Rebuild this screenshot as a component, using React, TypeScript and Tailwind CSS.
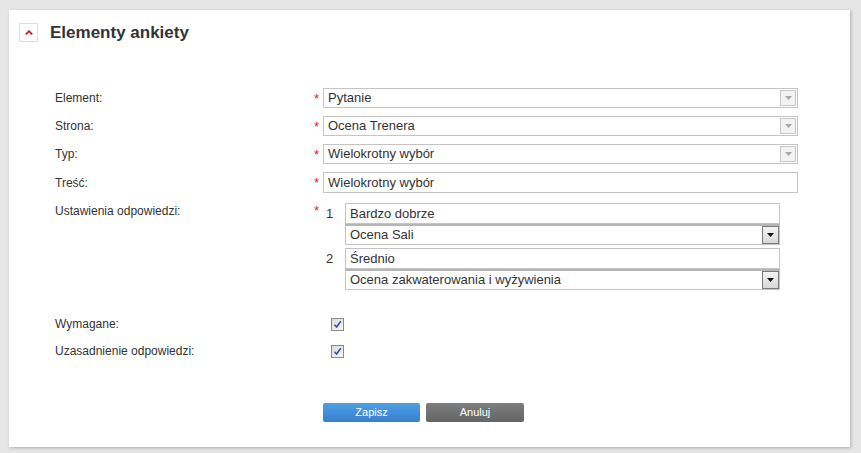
import React from "react";

const font = { fontFamily: '"Liberation Sans", Arial, sans-serif' };

function DisabledSelect({ value }: { value: string }) {
  return (
    <div className="flex h-[20px] w-[475px] items-stretch border border-[#c4c4c4] bg-white">
      <div className="flex-1 pl-[4px] text-[13px] leading-[18px] text-[#333]">{value}</div>
      <div className="m-[1px] flex w-[16px] items-center justify-center border border-[#c8c8c8] bg-[#f2f2f2]">
        <svg width="7" height="4" viewBox="0 0 7 4">
          <path d="M0 0h7L3.5 4z" fill="#a8a8a8" />
        </svg>
      </div>
    </div>
  );
}

function TextInput({ value, w }: { value: string; w: string }) {
  return (
    <div className={`h-[21px] ${w} border border-[#c4c4c4] bg-white pl-[4px] text-[13px] leading-[19px] text-[#333]`}>
      {value}
    </div>
  );
}

function NativeSelect({ value }: { value: string }) {
  return (
    <div className="flex h-[21px] w-[435px] items-stretch border border-[#c4c4c4] border-t-[#b5b5b5] border-t-2 bg-white">
      <div className="flex-1 pl-[4px] text-[13px] leading-[17px] text-[#333]">{value}</div>
      <div className="flex w-[17px] items-center justify-center border border-[#7a7a7a] bg-gradient-to-b from-[#f4f4f4] to-[#d8d8d8]">
        <svg width="7" height="4" viewBox="0 0 7 4">
          <path d="M0 0h7L3.5 4z" fill="#111" />
        </svg>
      </div>
    </div>
  );
}

function Star() {
  return <div className="w-[9px] pt-[1px] text-[13px] leading-[14px] text-[#e02020]">*</div>;
}

function Checkbox() {
  return (
    <div className="flex h-[13px] w-[13px] items-center justify-center border border-[#8a8a8a] bg-gradient-to-br from-[#dcdcdc] to-[#f6f6f6]">
      <svg width="9" height="9" viewBox="0 0 9 9">
        <path d="M1.5 4.8 L3.6 7 L7.8 1.2" stroke="#3a4fa8" strokeWidth="1.6" fill="none" />
      </svg>
    </div>
  );
}

export default function App() {
  return (
    <div className="h-[453px] w-[861px] overflow-hidden bg-[#e6e6e6] pl-[9px] pt-[10px]" style={font}>
      <div className="flex h-[437px] w-[841px] flex-col bg-white shadow-[1px_1px_3px_rgba(0,0,0,0.25)]">
        <div className="flex items-center pl-[10px] pt-[13px]">
          <div className="flex h-[19px] w-[19px] items-center justify-center border border-[#dedede] bg-white">
            <svg width="8" height="5" viewBox="0 0 8 5">
              <path d="M0.8 4.4 L4 1.2 L7.2 4.4" stroke="#d8141c" strokeWidth="1.8" fill="none" />
            </svg>
          </div>
          <div className="ml-[12px] text-[17px] font-bold leading-[19px] text-[#333]">Elementy ankiety</div>
        </div>

        <div className="mt-[46px] flex flex-col gap-[8px] pl-[46px] text-[12px] text-[#333]">
          <div className="flex items-center">
            <div className="w-[259px]">Element:</div>
            <Star />
            <DisabledSelect value="Pytanie" />
          </div>
          <div className="flex items-center">
            <div className="w-[259px]">Strona:</div>
            <Star />
            <DisabledSelect value="Ocena Trenera" />
          </div>
          <div className="flex items-center">
            <div className="w-[259px]">Typ:</div>
            <Star />
            <DisabledSelect value="Wielokrotny wybór" />
          </div>
          <div className="flex items-center">
            <div className="w-[259px]">Treść:</div>
            <Star />
            <TextInput value="Wielokrotny wybór" w="w-[475px]" />
          </div>
          <div className="mt-[2px] flex items-start">
            <div className="w-[259px] pt-[1px] leading-[14px]">Ustawienia odpowiedzi:</div>
            <Star />
            <div className="flex flex-col gap-[3px]">
              <div className="flex">
                <div className="w-[22px] pl-[3px] text-[13px] leading-[22px]">1</div>
                <div className="flex flex-col">
                  <TextInput value="Bardzo dobrze" w="w-[435px]" />
                  <NativeSelect value="Ocena Sali" />
                </div>
              </div>
              <div className="flex">
                <div className="w-[22px] pl-[3px] text-[13px] leading-[22px]">2</div>
                <div className="flex flex-col">
                  <TextInput value="Średnio" w="w-[435px]" />
                  <NativeSelect value="Ocena zakwaterowania i wyżywienia" />
                </div>
              </div>
            </div>
          </div>
          <div className="mt-[19px] flex items-center">
            <div className="w-[276px] leading-[14px]">Wymagane:</div>
            <Checkbox />
          </div>
          <div className="mt-[5px] flex items-center">
            <div className="w-[276px] leading-[14px]">Uzasadnienie odpowiedzi:</div>
            <Checkbox />
          </div>
        </div>

        <div className="mt-[45px] flex gap-[6px] pl-[314px]">
          <button className="h-[19px] w-[97px] rounded-[2px] bg-gradient-to-b from-[#4c9fe8] to-[#3a7fcb] text-[11px] leading-[19px] text-white">
            Zapisz
          </button>
          <button className="h-[19px] w-[98px] rounded-[2px] bg-gradient-to-b from-[#7e7e7e] to-[#646464] text-[11px] leading-[19px] text-white">
            Anuluj
          </button>
        </div>
      </div>
    </div>
  );
}
